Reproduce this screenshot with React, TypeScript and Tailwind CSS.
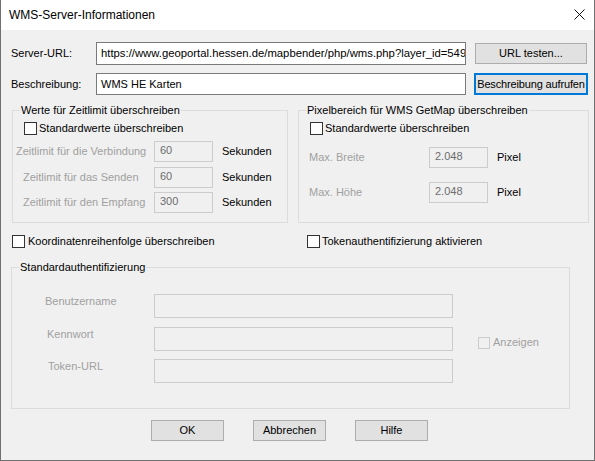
import type { ReactNode } from 'react'

function Box({ disabled, size = 'w-[13px] h-[13px]' }: { disabled?: boolean; size?: string }) {
  return (
    <span
      className={`block shrink-0 border ${size} ${
        disabled ? 'border-[#cccccc] bg-[#f0f0f0]' : 'border-[#333333] bg-white'
      }`}
    />
  )
}

function Field({ value, className }: { value?: string; className: string }) {
  return (
    <div
      className={`flex shrink-0 items-center border border-[#cccccc] bg-[#f0f0f0] pb-[2px] pl-[5px] text-[#6d6d6d] ${className}`}
    >
      {value}
    </div>
  )
}

function Group({ title, className, children }: { title: string; className: string; children: ReactNode }) {
  return (
    <div className={`relative shrink-0 border border-[#dcdcdc] ${className}`}>
      <span className="absolute -top-[8px] left-[7px] bg-[#f0f0f0] px-[1px] leading-[15px]">{title}</span>
      {children}
    </div>
  )
}

function Button({ label }: { label: string }) {
  return (
    <div className="flex h-[21px] w-[73px] items-center justify-center border border-[#adadad] bg-[#e1e1e1]">
      {label}
    </div>
  )
}

function TimeRow({ label, value, indent, mt }: { label: string; value: string; indent: string; mt: string }) {
  return (
    <div className={`flex h-[21px] items-center ${mt}`}>
      <div className={`w-[141px] text-[#a0a0a0] ${indent}`}>{label}</div>
      <Field value={value} className="h-[21px] w-[59px]" />
      <div className="ml-[9px]">Sekunden</div>
    </div>
  )
}

function PixelRow({ label, mt }: { label: string; mt: string }) {
  return (
    <div className={`flex h-[21px] items-center ${mt}`}>
      <div className="w-[130px] pl-[10px] text-[#a0a0a0]">{label}</div>
      <Field value="2.048" className="h-[21px] w-[59px]" />
      <div className="ml-[9px]">Pixel</div>
    </div>
  )
}

export default function App() {
  return (
    <div className="flex h-[461px] w-[595px] flex-col border-x border-b border-[#707070] bg-[#f0f0f0] font-['Liberation_Sans',Arial,sans-serif] text-[11px] leading-[13px] text-black">
      <div className="flex h-[30px] shrink-0 items-center justify-between bg-white pl-[8px] pr-[9px]">
        <span className="text-[12px]">WMS-Server-Informationen</span>
        <svg width="11" height="11" viewBox="0 0 11 11" className="mb-[1px]">
          <path d="M0.5 0.5 L10.5 10.5 M10.5 0.5 L0.5 10.5" stroke="#111" strokeWidth="1" fill="none" />
        </svg>
      </div>

      <div className="flex flex-col">
        <div className="mt-[12px] flex h-[23px] items-center">
          <div className="ml-[10px] w-[85px]">Server-URL:</div>
          <div className="flex h-[23px] w-[370px] items-center overflow-hidden whitespace-nowrap border border-[#7a7a7a] bg-white pl-[4px] text-[11.3px]">
            https://www.geoportal.hessen.de/mapbender/php/wms.php?layer_id=549
          </div>
          <div className="ml-[9px] flex h-[21px] w-[112px] items-center justify-center border border-[#adadad] bg-[#e1e1e1]">
            URL testen...
          </div>
        </div>

        <div className="mt-[8px] flex h-[22px] items-center">
          <div className="ml-[10px] w-[85px]">Beschreibung:</div>
          <div className="flex h-[22px] w-[370px] items-center border border-[#7a7a7a] bg-white pl-[4px]">
            WMS HE Karten
          </div>
          <div className="ml-[8px] flex h-[22px] w-[114px] items-center justify-center whitespace-nowrap border-2 border-[#0078d7] bg-[#e1e1e1] tracking-[-0.15px]">
            Beschreibung aufrufen
          </div>
        </div>

        <div className="mt-[15px] flex">
          <Group title="Werte für Zeitlimit überschreiben" className="ml-[11px] h-[113px] w-[276px]">
            <div className="ml-[11px] mt-[11px] flex items-center gap-[2px]">
              <Box />
              <span>Standardwerte überschreiben</span>
            </div>
            <TimeRow label="Zeitlimit für die Verbindung" value="60" indent="pl-[3px]" mt="mt-[6px]" />
            <TimeRow label="Zeitlimit für das Senden" value="60" indent="pl-[10px]" mt="mt-[5px]" />
            <TimeRow label="Zeitlimit für den Empfang" value="300" indent="pl-[10px]" mt="mt-[4px]" />
          </Group>

          <Group title="Pixelbereich für WMS GetMap überschreiben" className="ml-[10px] h-[113px] w-[291px]">
            <div className="ml-[11px] mt-[11px] flex items-center gap-[2px]">
              <Box />
              <span>Standardwerte überschreiben</span>
            </div>
            <PixelRow label="Max. Breite" mt="mt-[12px]" />
            <PixelRow label="Max. Höhe" mt="mt-[14px]" />
          </Group>
        </div>

        <div className="mt-[12px] flex h-[13px] items-center">
          <div className="ml-[11px] flex w-[295px] items-center gap-[3px]">
            <Box />
            <span>Koordinatenreihenfolge überschreiben</span>
          </div>
          <div className="flex items-center gap-[2px]">
            <Box />
            <span>Tokenauthentifizierung aktivieren</span>
          </div>
        </div>

        <Group title="Standardauthentifizierung" className="ml-[10px] mt-[19px] h-[142px] w-[559px]">
          <div className="mt-[26px] flex items-start">
            <div className="w-[142px] pl-[33px] leading-[14px] text-[#a0a0a0]">Benutzername</div>
            <Field className="h-[24px] w-[299px]" />
          </div>
          <div className="mt-[9px] flex items-start">
            <div className="w-[142px] pl-[35px] leading-[14px] text-[#a0a0a0]">Kennwort</div>
            <Field className="h-[24px] w-[299px]" />
            <div className="ml-[25px] mt-[9px] flex items-center gap-[3px] text-[#a0a0a0]">
              <Box disabled size="w-[12px] h-[12px]" />
              <span>Anzeigen</span>
            </div>
          </div>
          <div className="mt-[8px] flex items-start">
            <div className="w-[142px] pl-[36px] leading-[14px] text-[#a0a0a0]">Token-URL</div>
            <Field className="h-[24px] w-[299px]" />
          </div>
        </Group>

        <div className="ml-[150px] mt-[11px] flex gap-[29px]">
          <Button label="OK" />
          <Button label="Abbrechen" />
          <Button label="Hilfe" />
        </div>
      </div>
    </div>
  )
}
